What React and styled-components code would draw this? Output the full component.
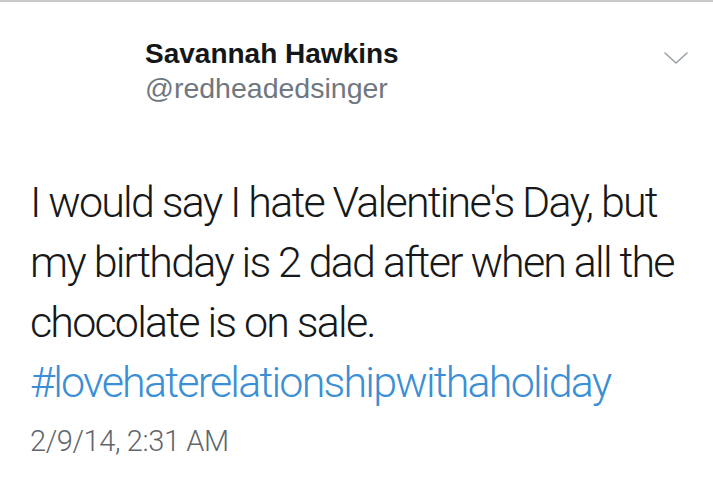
import React from 'react'
import styled, { createGlobalStyle } from 'styled-components'

const GlobalStyle = createGlobalStyle`
  html, body {
    margin: 0;
    padding: 0;
    background: #fff;
  }
  body {
    font-family: Roboto, 'Liberation Sans', sans-serif;
    -webkit-font-smoothing: antialiased;
  }
`

const Card = styled.div`
  width: 713px;
  height: 477px;
  box-sizing: border-box;
  border-top: 2px solid #c9c9c9;
  background: #fff;
  overflow: hidden;
`

const Header = styled.div`
  display: flex;
  align-items: flex-start;
  padding: 36px 24px 0 145px;
`

const Names = styled.div`
  flex: 1;
  display: flex;
  flex-direction: column;
`

const Name = styled.div`
  font-family: 'Liberation Sans', Arial, sans-serif;
  font-weight: 700;
  font-size: 28px;
  line-height: 32px;
  color: #14171a;
`

const Handle = styled.div`
  font-family: 'Liberation Sans', Arial, sans-serif;
  font-size: 28.5px;
  line-height: 36px;
  color: #6f7780;
`

const Caret = styled.svg`
  width: 26px;
  height: 16px;
  margin-top: 12px;
`

const Body = styled.div`
  padding: 0 0 0 30px;
  margin-top: 66px;
`

const Text = styled.p`
  margin: 0;
  font-weight: 300;
  font-size: 43px;
  line-height: 60px;
  letter-spacing: -1.8px;
  white-space: nowrap;
  color: #16181a;
`

const Tag = styled.span`
  color: #3b8fd4;
`

const Stamp = styled.div`
  margin-top: 10px;
  font-weight: 300;
  font-size: 29px;
  line-height: 38px;
  letter-spacing: -0.4px;
  color: #5f666d;
`

export default function App() {
  return (
    <>
      <GlobalStyle />
      <Card>
        <Header>
          <Names>
            <Name>Savannah Hawkins</Name>
            <Handle>@redheadedsinger</Handle>
          </Names>
          <Caret viewBox="0 0 26 16">
            <path d="M2 3 L13 13 L24 3" fill="none" stroke="#9aa0a6" strokeWidth="1.6" strokeLinecap="round" strokeLinejoin="round" />
          </Caret>
        </Header>
        <Body>
          <Text>
            I would say I hate Valentine's Day, but
            <br />
            my birthday is 2 dad after when all the
            <br />
            chocolate is on sale.
            <br />
            <Tag>#lovehaterelationshipwithaholiday</Tag>
          </Text>
          <Stamp>2/9/14, 2:31 AM</Stamp>
        </Body>
      </Card>
    </>
  )
}
